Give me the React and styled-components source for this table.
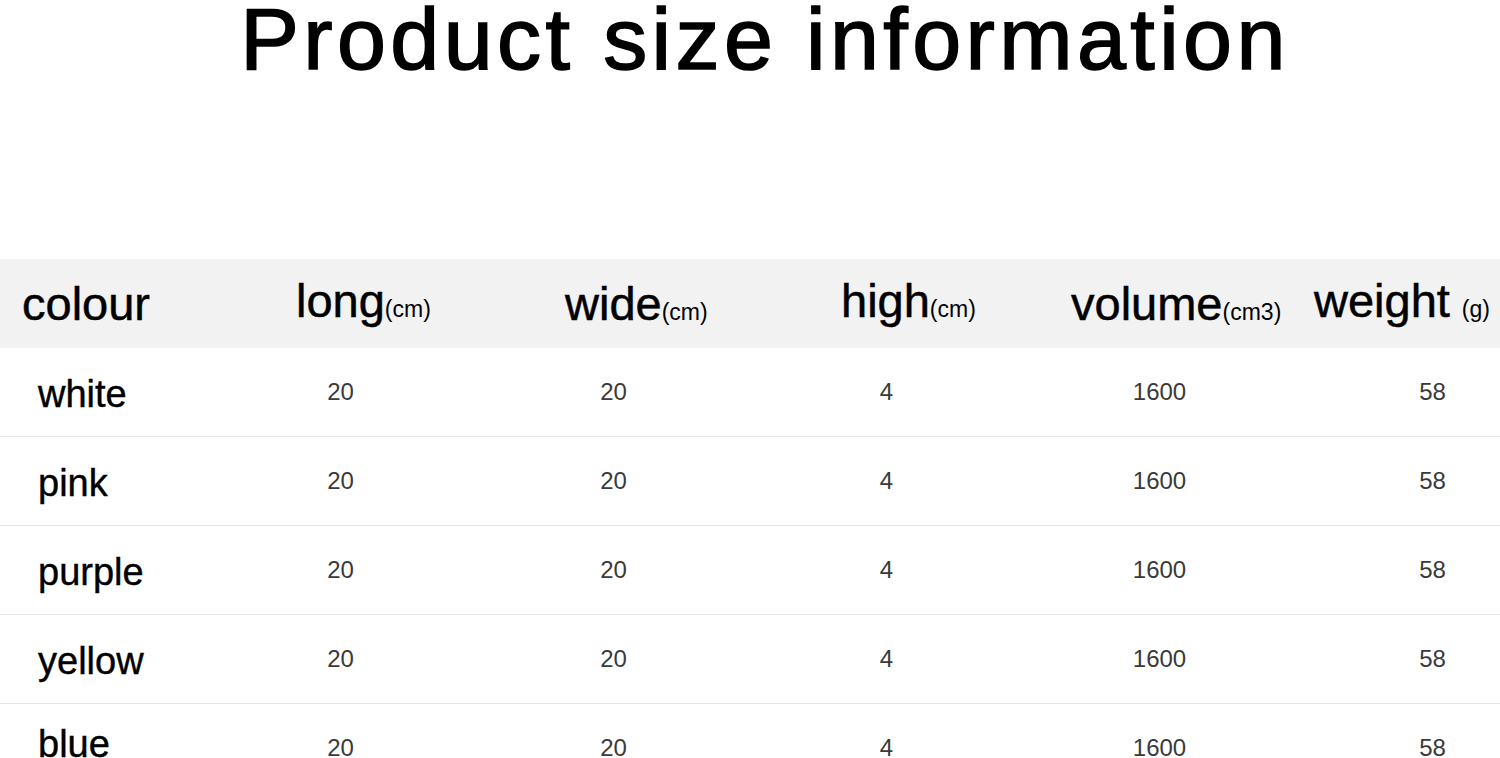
import React from 'react';
import styled, { createGlobalStyle } from 'styled-components';

const GlobalStyle = createGlobalStyle`
    html, body {
        margin: 0;
        padding: 0;
        background: #ffffff;
        overflow: hidden;
    }
    body {
        font-family: "Liberation Sans", Arial, sans-serif;
        color: #000;
    }
`;

const Pagina = styled.main`
    width: 1500px;
    height: 758px;
    overflow: hidden;
`;

const Titulo = styled.h1`
    margin: 0 0 181px;
    padding-left: 30px;
    font-size: 88px;
    line-height: 78px;
    font-weight: normal;
    letter-spacing: 4.4px;
    -webkit-text-stroke: 1.6px #000;
    text-align: center;
    white-space: nowrap;
`;

const Tabela = styled.div`
    width: 1500px;
    overflow: hidden;
`;

const Linha = styled.div`
    display: grid;
    grid-template-columns: 204px repeat(5, 273px);
    width: 1569px;
    align-items: center;
`;

const LinhaCabecalho = styled(Linha)`
    height: 89px;
    background-color: #f2f2f2;
`;

const LinhaDados = styled(Linha)`
    height: 88px;
    border-bottom: 1px solid #e6e6e6;
`;

const CelulaCabecalho = styled.div`
    padding-left: ${p => p.$recuo}px;
    font-size: 47px;
    line-height: 1;
    white-space: nowrap;
    -webkit-text-stroke: 0.5px #000;
    position: relative;
    top: ${p => (p.$sobe ? -3 : 0)}px;
`;

const Unidade = styled.span`
    font-size: 23px;
    -webkit-text-stroke: 0;
    margin-left: ${p => (p.$espaco ? 12 : 0)}px;
`;

const NomeCor = styled.div`
    padding-left: 38px;
    font-size: 38px;
    line-height: 1;
    -webkit-text-stroke: 0.4px #000;
    position: relative;
    top: ${p => (p.$ultima ? -4 : 2)}px;
`;

const Valor = styled.div`
    text-align: center;
    font-size: 24px;
    line-height: 1;
    color: #3a3a3a;
`;

const cabecalhos = [
    { nome: 'colour', recuo: 22 },
    { nome: 'long', unidade: '(cm)', recuo: 92, sobe: true },
    { nome: 'wide', unidade: '(cm)', recuo: 88 },
    { nome: 'high', unidade: '(cm)', recuo: 91, sobe: true },
    { nome: 'volume', unidade: '(cm3)', recuo: 48 },
    { nome: 'weight', unidade: '(g)', recuo: 18, sobe: true, espaco: true },
];

const cores = ['white', 'pink', 'purple', 'yellow', 'blue'];
const medidas = ['20', '20', '4', '1600', '58'];

const App = () => {
    return (
        <Pagina>
            <GlobalStyle />
            <Titulo>Product size information</Titulo>
            <Tabela>
                <LinhaCabecalho>
                    {cabecalhos.map(c => (
                        <CelulaCabecalho key={c.nome} $recuo={c.recuo} $sobe={c.sobe}>
                            {c.nome}
                            {c.unidade && <Unidade $espaco={c.espaco}>{c.unidade}</Unidade>}
                        </CelulaCabecalho>
                    ))}
                </LinhaCabecalho>
                {cores.map((cor, i) => (
                    <LinhaDados key={cor}>
                        <NomeCor $ultima={i === cores.length - 1}>{cor}</NomeCor>
                        {medidas.map((m, j) => (
                            <Valor key={j}>{m}</Valor>
                        ))}
                    </LinhaDados>
                ))}
            </Tabela>
        </Pagina>
    );
};

export default App;
